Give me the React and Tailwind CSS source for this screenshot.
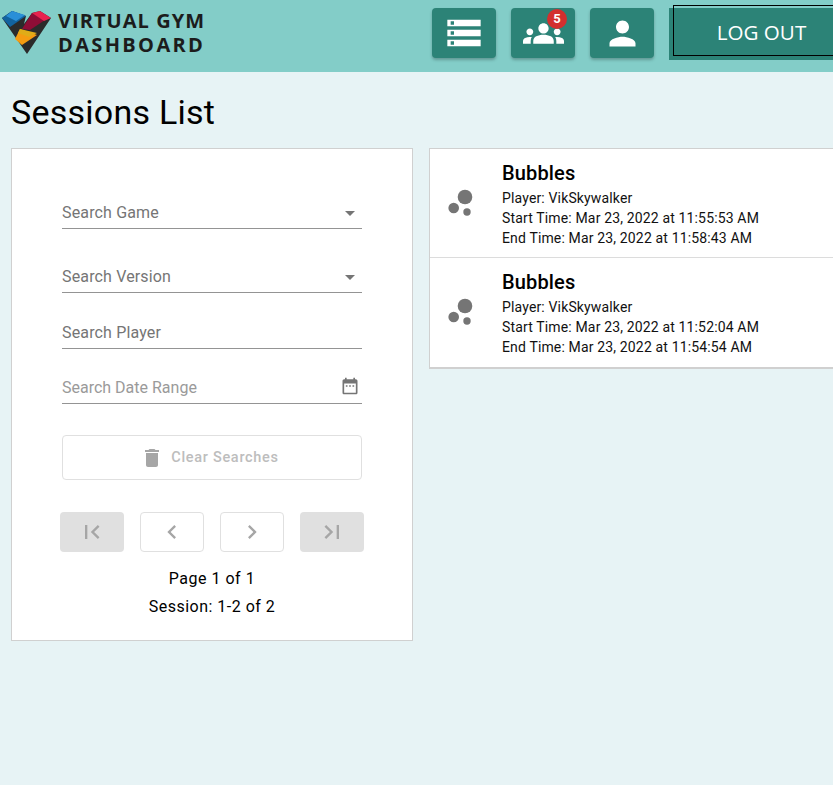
import React from "react";

const P = {
  storage: "M2 20h20v-4H2v4zm2-3h2v2H4v-2zM2 4v4h20V4H2zm4 3H4V5h2v2zm-4 7h20v-4H2v4zm2-3h2v2H4v-2z",
  groups: "M12 12.75c1.63 0 3.07.39 4.24.9 1.08.48 1.76 1.56 1.76 2.73V18H6v-1.61c0-1.18.68-2.26 1.76-2.73 1.17-.52 2.61-.91 4.24-.91zM4 13c1.1 0 2-.9 2-2s-.9-2-2-2-2 .9-2 2 .9 2 2 2zm1.13 1.1c-.37-.06-.74-.1-1.13-.1-.99 0-1.93.21-2.78.58C.48 14.9 0 15.62 0 16.43V18h4.5v-1.61c0-.83.23-1.61.63-2.29zM20 13c1.1 0 2-.9 2-2s-.9-2-2-2-2 .9-2 2 .9 2 2 2zm4 3.43c0-.81-.48-1.53-1.22-1.85-.85-.37-1.79-.58-2.78-.58-.39 0-.76.04-1.13.1.4.68.63 1.46.63 2.29V18H24v-1.57zM12 6c1.66 0 3 1.34 3 3s-1.34 3-3 3-3-1.34-3-3 1.34-3 3-3z",
  person: "M12 12c2.21 0 4-1.79 4-4s-1.79-4-4-4-4 1.79-4 4 1.79 4 4 4zm0 2c-2.67 0-8 1.34-8 4v2h16v-2c0-2.66-5.33-4-8-4z",
  del: "M6 19c0 1.1.9 2 2 2h8c1.1 0 2-.9 2-2V7H6v12zM19 4h-3.5l-1-1h-5l-1 1H5v2h14V4z",
  first: "M18.41 16.59L13.82 12l4.59-4.59L17 6l-6 6 6 6zM6 6h2v12H6z",
  last: "M5.59 7.41L10.18 12l-4.59 4.59L7 18l6-6-6-6zM16 6h2v12h-2z",
  left: "M15.41 7.41L14 6l-6 6 6 6 1.41-1.41L10.83 12z",
  right: "M10 6L8.59 7.41 13.17 12l-4.58 4.58L10 18l6-6z",
  cal: "M9 11H7v2h2v-2zm4 0h-2v2h2v-2zm4 0h-2v2h2v-2zm2-7h-1V2h-2v2H8V2H6v2H5c-1.11 0-1.99.9-1.99 2L3 20c0 1.1.89 2 2 2h14c1.1 0 2-.9 2-2V6c0-1.1-.9-2-2-2zm0 16H5V9h14v11z",
};

function Icon({ d, className }) {
  return (
    <svg viewBox="0 0 24 24" fill="currentColor" className={className}>
      <path d={d} />
    </svg>
  );
}

function Logo() {
  return (
    <svg viewBox="0 0 54 56" className="w-[54px] h-[56px] shrink-0">
      <polygon points="2,18 12,11 26,16 24,24 32,13 40,11 51,18 27,54" fill="#2b2b2b" />
      <polygon points="2,18 12,11 26,16 10,27" fill="#12639f" />
      <polygon points="6,16 12,11 25,15 16,21" fill="#2a8fd8" />
      <polygon points="32,13 45,20 30,30 22,29" fill="#8e0d36" />
      <polygon points="32,13 40,11 51,18 44,21" fill="#e8234f" />
      <polygon points="15,39 20,29 37,35 22,45" fill="#f59c11" />
      <polygon points="20,29 37,33 29,37 18,33" fill="#e0ac18" />
    </svg>
  );
}

function NavButton({ children }) {
  return (
    <button className="relative w-16 h-[50px] rounded bg-[#2c8377] text-white flex items-center justify-center shadow-[0_2px_3px_rgba(0,0,0,0.25)]">
      {children}
    </button>
  );
}

function Field({ label, select, cal, light, className }) {
  return (
    <div className={`flex items-center h-[32px] border-b border-[#949494] ${className}`}>
      <span className={`flex-1 text-[16px] ${light ? "text-[#9a9a9a]" : "text-[#757575] tracking-[0.15px]"}`}>{label}</span>
      {select && <span className="w-0 h-0 mr-[7px] mt-[2px] border-x-[5px] border-x-transparent border-t-[5px] border-t-[#757575]" />}
      {cal && <Icon d={P.cal} className="w-[20px] h-[20px] text-[#757575] mb-[4px] mr-[2px]" />}
    </div>
  );
}

function PageBtn({ d, filled }) {
  return (
    <button className={`w-16 h-10 rounded flex items-center justify-center text-[#a6a6a6] ${filled ? "bg-[#e0e0e0]" : "bg-white border border-[#e0e0e0]"}`}>
      <Icon d={d} className="w-7 h-7" />
    </button>
  );
}

function Session({ start, end, border }) {
  return (
    <div className={`flex h-[109px] ${border ? "border-b border-[#dcdcdc]" : ""}`}>
      <div className="w-[72px] pl-[14px] pt-[31px]">
        <svg viewBox="0 0 40 40" fill="#757575" className="w-[40px] h-[40px]">
          <circle cx="21" cy="17" r="7.3" />
          <circle cx="9.7" cy="28" r="5.3" />
          <circle cx="23" cy="32" r="3.7" />
        </svg>
      </div>
      <div className="pt-[11px] tracking-[0.15px]">
        <div className="text-[20px] leading-[26px] font-medium text-black">Bubbles</div>
        <div className="text-[14px] leading-[20px] text-[#111] mt-[2px]">Player: VikSkywalker</div>
        <div className="text-[14px] leading-[20px] text-[#111]">Start Time: {start}</div>
        <div className="text-[14px] leading-[20px] text-[#111]">End Time: {end}</div>
      </div>
    </div>
  );
}

export default function App() {
  return (
    <div className="w-[833px] h-[785px] overflow-hidden bg-[#e7f3f5] font-['Roboto',sans-serif]">
      <header className="h-[72px] bg-[#83cdc8] flex items-start justify-between">
        <div className="flex items-start">
          <Logo />
          <div className="ml-[4px] mt-[9px] font-['Open_Sans',sans-serif] font-bold text-[20px] leading-[24px] text-[#1c1c1c]">
            <div className="tracking-[1.05px]">VIRTUAL GYM</div>
            <div className="tracking-[2.35px]">DASHBOARD</div>
          </div>
        </div>
        <div className="flex items-start pt-[8px] w-[401px] shrink-0 gap-[15px]">
          <NavButton><Icon d={P.storage} className="w-[40px] h-[40px]" /></NavButton>
          <NavButton>
            <Icon d={P.groups} className="w-[41px] h-[41px]" />
            <span className="absolute top-[1px] left-[36px] w-5 h-5 rounded-full bg-[#d32f2f] text-white text-[13px] font-bold flex items-center justify-center">5</span>
          </NavButton>
          <NavButton><Icon d={P.person} className="w-[39px] h-[39px]" /></NavButton>
          <div className="relative flex-1 h-[52px]">
            <div className="h-[52px] bg-[#2c8377]" />
            <button className="absolute left-[4px] top-[-3px] w-[177px] h-[51px] pt-[4px] border border-black text-white text-[20.6px] font-['Open_Sans',sans-serif]">LOG OUT</button>
          </div>
        </div>
      </header>

      <h1 className="ml-[11px] mt-[20px] text-[34px] leading-[40px] font-normal text-black tracking-[0.25px]">Sessions List</h1>

      <div className="flex items-start gap-[16px] pl-[11px] mt-[16px]">
        <section className="w-[402px] h-[493px] shrink-0 bg-white border border-[#d0d0d0] px-[50px] pt-[48px] flex flex-col">
          <Field label="Search Game" select />
          <Field label="Search Version" select className="mt-[32px]" />
          <Field label="Search Player" className="mt-[24px]" />
          <Field label="Search Date Range" cal light className="mt-[23px]" />
          <button className="mt-[31px] h-[45px] pr-[5px] rounded border border-[#e0e0e0] flex items-center justify-center text-[#bdbdbd] text-[14.5px] font-medium tracking-[0.7px]">
            <Icon d={P.del} className="w-6 h-6 text-[#a6a6a6] mr-[7px]" />
            Clear Searches
          </button>
          <div className="flex gap-[16px] mt-[32px] mx-[-2px]">
            <PageBtn d={P.first} filled />
            <PageBtn d={P.left} />
            <PageBtn d={P.right} />
            <PageBtn d={P.last} filled />
          </div>
          <div className="mt-[13px] text-center text-[16px] leading-[28px] tracking-[0.5px] text-black">
            <div>Page 1 of 1</div>
            <div>Session: 1-2 of 2</div>
          </div>
        </section>

        <section className="w-[500px] shrink-0 bg-white border border-[#d0d0d0] border-b-2">
          <Session border start="Mar 23, 2022 at 11:55:53 AM" end="Mar 23, 2022 at 11:58:43 AM" />
          <Session start="Mar 23, 2022 at 11:52:04 AM" end="Mar 23, 2022 at 11:54:54 AM" />
        </section>
      </div>
    </div>
  );
}
